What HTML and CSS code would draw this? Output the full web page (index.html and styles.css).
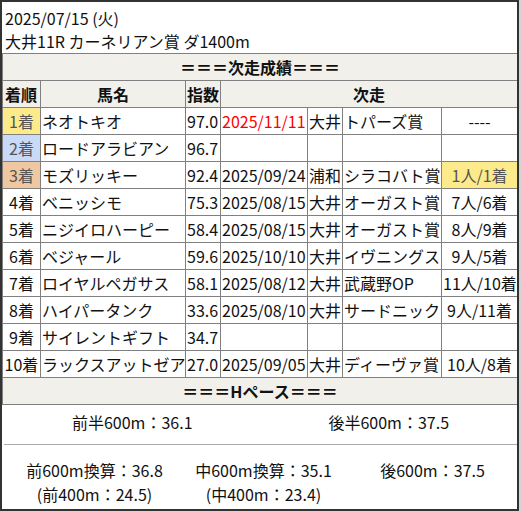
FILE: index.html
```html
<!DOCTYPE html>
<html lang="ja">
<head>
<meta charset="utf-8">
<title>次走成績</title>
<link rel="stylesheet" href="styles.css">
</head>
<body>
<div class="frame">
  <div class="head">
    <div>2025/07/15 (火)</div>
    <div>大井11R カーネリアン賞 ダ1400m</div>
  </div>
  <table class="res">
    <colgroup>
      <col class="c1"><col class="c2"><col class="c3"><col class="c4"><col class="c5"><col class="c6"><col class="c7">
    </colgroup>
    <tr><th colspan="7" class="sec">＝＝＝次走成績＝＝＝</th></tr>
    <tr class="hdr"><th class="l">着順</th><th>馬名</th><th>指数</th><th colspan="4">次走</th></tr>
    <tr><td class="pos gold">1着</td><td>ネオトキオ</td><td>97.0</td><td class="red">2025/11/11</td><td>大井</td><td>トパーズ賞</td><td class="ctr">----</td></tr>
    <tr><td class="pos silver">2着</td><td>ロードアラビアン</td><td>96.7</td><td></td><td></td><td></td><td></td></tr>
    <tr><td class="pos bronze">3着</td><td>モズリッキー</td><td>92.4</td><td>2025/09/24</td><td>浦和</td><td>シラコバト賞</td><td class="ctr gold">1人/1着</td></tr>
    <tr><td class="pos">4着</td><td>ベニッシモ</td><td>75.3</td><td>2025/08/15</td><td>大井</td><td>オーガスト賞</td><td class="ctr">7人/6着</td></tr>
    <tr><td class="pos">5着</td><td>ニジイロハーピー</td><td>58.4</td><td>2025/08/15</td><td>大井</td><td>オーガスト賞</td><td class="ctr">8人/9着</td></tr>
    <tr><td class="pos">6着</td><td>ベジャール</td><td>59.6</td><td>2025/10/10</td><td>大井</td><td>イヴニングス</td><td class="ctr">9人/5着</td></tr>
    <tr><td class="pos">7着</td><td>ロイヤルペガサス</td><td>58.1</td><td>2025/08/12</td><td>大井</td><td>武蔵野OP</td><td class="ctr">11人/10着</td></tr>
    <tr><td class="pos">8着</td><td>ハイパータンク</td><td>33.6</td><td>2025/08/10</td><td>大井</td><td>サードニック</td><td class="ctr">9人/11着</td></tr>
    <tr><td class="pos">9着</td><td>サイレントギフト</td><td>34.7</td><td></td><td></td><td></td><td></td></tr>
    <tr><td class="pos">10着</td><td>ラックスアットゼア</td><td>27.0</td><td>2025/09/05</td><td>大井</td><td>ディーヴァ賞</td><td class="ctr">10人/8着</td></tr>
    <tr class="last"><th colspan="7" class="sec">＝＝＝Hペース＝＝＝</th></tr>
  </table>
  <div class="halves">
    <div>前半600m：36.1</div>
    <div>後半600m：37.5</div>
  </div>
  <div class="thirds">
    <div>前600m換算：36.8<br>(前400m：24.5)</div>
    <div>中600m換算：35.1<br>(中400m：23.4)</div>
    <div>後600m：37.5</div>
  </div>
</div>
</body>
</html>
```

FILE: styles.css
```css
html, body {
  margin: 0;
  padding: 0;
  background: #d4d4d4;
}
body {
  font-family: "Noto Sans CJK JP", "Noto Sans", sans-serif;
  font-size: 16px;
  color: #111;
}
.frame {
  width: 515px;
  height: 507px;
  border: 2px solid #333;
  background: #fff;
  overflow: hidden;
}
.head {
  padding: 5px 3px 0;
  line-height: 23px;
}
.res {
  border-collapse: separate;
  border-spacing: 0;
  table-layout: fixed;
  width: 515px;
}
.c1 { width: 38px; }
.c2 { width: 145px; }
.c3 { width: 35px; }
.c4 { width: 87px; }
.c5 { width: 35px; }
.c6 { width: 99px; }
.c7 { width: 76px; }
.res th, .res td {
  border-top: 1px solid #808080;
  border-left: 1px solid #808080;
  height: 26px;
  line-height: 26px;
  padding: 0 1px;
  white-space: nowrap;
  overflow: hidden;
  text-align: left;
  font-weight: normal;
}
.res th {
  background: #f2f0eb;
  font-weight: bold;
  text-align: center;
}
.res th.l { text-align: left; padding-left: 2px; }
.res .last th { border-bottom: 1px solid #808080; }
.res td.pos { text-align: center; padding: 0; }
.res td.ctr { text-align: center; }
.gold { background: #fdeb8b; color: #555; }
.silver { background: #c8daf7; color: #555; }
.bronze { background: #efc8a2; color: #555; }
.red { color: #ff0000; }
.halves {
  display: grid;
  grid-template-columns: 1fr 1fr;
  padding: 5px 0 10px;
  line-height: 24px;
  text-align: center;
  border-bottom: 1px solid #aaa;
  margin: 0 0 0 2px;
}
.thirds {
  display: grid;
  grid-template-columns: 1fr 1fr 1fr;
  padding: 13px 0 0 8px;
  line-height: 24px;
  text-align: center;
}
```
